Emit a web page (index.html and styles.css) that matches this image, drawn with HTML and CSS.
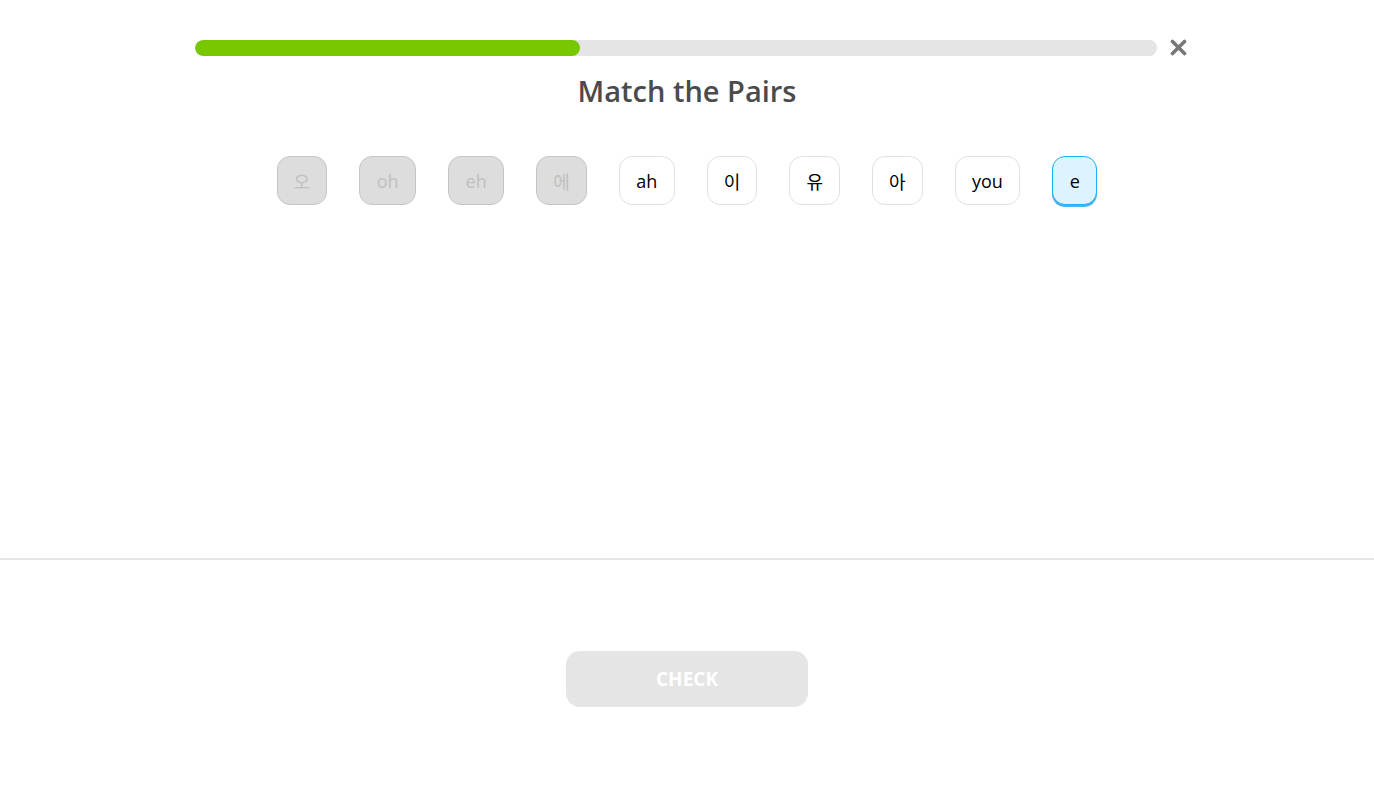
FILE: index.html
```html
<!DOCTYPE html>
<html lang="en">
<head>
<meta charset="utf-8">
<title>Match the Pairs</title>
<link rel="stylesheet" href="styles.css">
</head>
<body>
<div class="page">
  <main class="lesson">
    <div class="topbar">
      <div class="progress"><div class="progress-fill" style="width:40%"></div></div>
      <button class="close" aria-label="Close">
        <svg width="17" height="17" viewBox="0 0 17 17"><path d="M2.5 2.5 L14.5 14.5 M14.5 2.5 L2.5 14.5" stroke="#777" stroke-width="3.6" stroke-linecap="round"/></svg>
      </button>
    </div>
    <h1 class="title">Match the Pairs</h1>
    <div class="tiles">
      <span class="tile done ko">오</span>
      <span class="tile done">oh</span>
      <span class="tile done">eh</span>
      <span class="tile done ko">에</span>
      <span class="tile">ah</span>
      <span class="tile ko">이</span>
      <span class="tile ko">유</span>
      <span class="tile ko">아</span>
      <span class="tile">you</span>
      <span class="tile selected">e</span>
    </div>
  </main>
  <footer class="footer">
    <button class="check" disabled>CHECK</button>
  </footer>
</div>
</body>
</html>
```
FILE: styles.css
```css
* { box-sizing: border-box; }
html, body { margin: 0; padding: 0; background: #fff; }
body { font-family: "Open Sans", "Noto Sans CJK KR", sans-serif; }
.page { display: flex; flex-direction: column; height: 786px; }
.lesson { height: 558px; display: flex; flex-direction: column; align-items: center; }
.topbar { margin-top: 39px; width: 992px; margin-left: 8px; display: flex; align-items: center; gap: 13px; }
.progress { flex: 1; height: 16px; background: #e5e5e5; border-radius: 8px; overflow: hidden; }
.progress-fill { height: 100%; background: #78c800; border-radius: 8px; }
.close { border: 0; background: none; padding: 0; width: 17px; height: 17px; display: flex; cursor: pointer; }
.title { margin: 16px 0 0; font-family: "Open Sans", sans-serif; font-weight: 600; font-size: 29px; line-height: 38px; color: #4b4b4b; letter-spacing: 0; }
.tiles { margin-top: 46px; display: flex; gap: 32px; }
.tile { height: 49px; padding: 0 16.5px; display: flex; align-items: center; justify-content: center; font-family: "Open Sans", "Noto Sans CJK KR", sans-serif; font-size: 18px; font-weight: 500; color: #000; background: #fff; border: 1px solid #e0e0e0; border-radius: 13px; min-width: 45px; }
.tile.ko { font-weight: 400; padding: 0 16px; }
.tile.done { background: #dddddd; border-color: #c6c6c6; color: #c0c0c0; }
.tile.selected { background: #ddf4ff; border-color: #1cb0f6; box-shadow: 0 2px 0 #4fb2e6; padding: 0 15px; }
.footer { flex: 1; border-top: 2px solid #e5e5e5; display: flex; justify-content: center; align-items: flex-start; padding-top: 91px; }
.check { width: 242px; height: 56px; border: 0; border-radius: 14px; background: #e5e5e5; color: #fff; font-family: "Open Sans", sans-serif; font-weight: 700; font-size: 19px; letter-spacing: 0; }
```
